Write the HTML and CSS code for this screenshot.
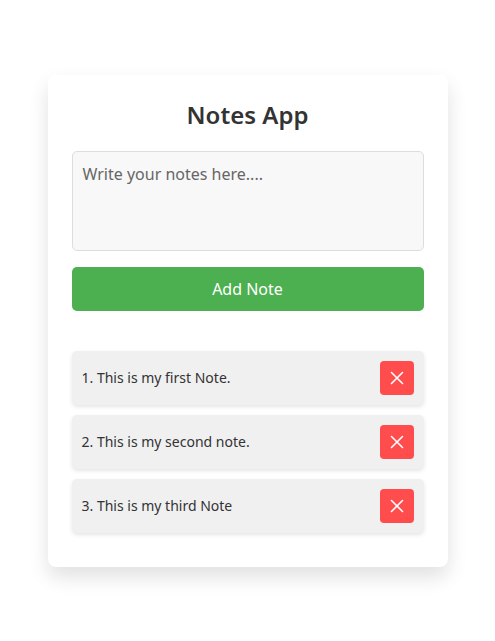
FILE: index.html
```html
<!DOCTYPE html>
<html lang="en">
<head>
<meta charset="UTF-8">
<title>Notes App</title>
<link rel="stylesheet" href="styles.css">
</head>
<body>
<div class="card">
  <h1 class="title">Notes App</h1>
  <textarea class="input" placeholder="Write your notes here...."></textarea>
  <button class="add-btn">Add Note</button>
  <ul class="notes">
    <li class="note"><span class="note-text">1. This is my first Note.</span><button class="del-btn" aria-label="Delete"><svg width="14" height="14" viewBox="0 0 14 14"><path d="M1.5 1.5L12.5 12.5M12.5 1.5L1.5 12.5" stroke="#fff" stroke-width="1.6" stroke-linecap="round"/></svg></button></li>
    <li class="note"><span class="note-text">2. This is my second note.</span><button class="del-btn" aria-label="Delete"><svg width="14" height="14" viewBox="0 0 14 14"><path d="M1.5 1.5L12.5 12.5M12.5 1.5L1.5 12.5" stroke="#fff" stroke-width="1.6" stroke-linecap="round"/></svg></button></li>
    <li class="note"><span class="note-text">3. This is my third Note</span><button class="del-btn" aria-label="Delete"><svg width="14" height="14" viewBox="0 0 14 14"><path d="M1.5 1.5L12.5 12.5M12.5 1.5L1.5 12.5" stroke="#fff" stroke-width="1.6" stroke-linecap="round"/></svg></button></li>
  </ul>
</div>
</body>
</html>
```

FILE: styles.css
```css
* { box-sizing: border-box; }
html, body { margin: 0; padding: 0; }
body {
  font-family: "Noto Sans", "Open Sans", sans-serif;
  background: #fff;
  min-height: 100vh;
  display: flex;
  align-items: center;
  justify-content: center;
  color: #333;
}
.card {
  width: 400px;
  background: #fff;
  border-radius: 8px;
  padding: 24px;
  box-shadow: 0 10px 20px rgba(0,0,0,0.12);
}
.title {
  margin: 0 0 20px;
  font-size: 24px;
  line-height: 32px;
  font-weight: 600;
  text-align: center;
  color: #333;
}
.input {
  display: block;
  width: 100%;
  height: 100px;
  padding: 10px;
  font-family: inherit;
  font-size: 16px;
  line-height: 24px;
  background: #f8f8f8;
  border: 1px solid #ddd;
  border-radius: 5px;
  resize: none;
  margin: 0 0 16px;
}
.input::placeholder { color: #666; }
.add-btn {
  display: block;
  width: 100%;
  height: 44px;
  border: none;
  border-radius: 5px;
  background: #4caf50;
  color: #fff;
  font-family: inherit;
  font-size: 16px;
}
.notes {
  list-style: none;
  margin: 40px 0 0;
  padding: 0;
}
.note {
  display: flex;
  align-items: center;
  justify-content: space-between;
  background: #f0f0f0;
  border-radius: 5px;
  padding: 10px;
  margin-bottom: 10px;
  box-shadow: 0 2px 4px rgba(0,0,0,0.1);
}
.note-text { font-size: 14px; color: #333; }
.del-btn {
  width: 34px;
  height: 34px;
  border: none;
  border-radius: 4px;
  background: #ff4d4d;
  display: flex;
  align-items: center;
  justify-content: center;
  padding: 0;
}
```
